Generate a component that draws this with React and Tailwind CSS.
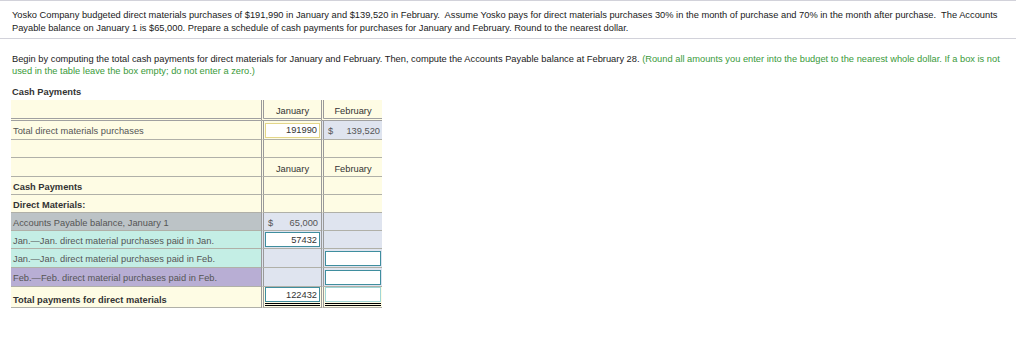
import React from "react";

const yellow = "bg-[#fefce4]";
const blue = "bg-[#dfe4ef]";
const gray = "bg-[#bcc3c6]";
const teal = "bg-[#c4eee5]";
const purple = "bg-[#b8aed4]";

const line = "border-b border-b-[#b0b0a8]";
const sep = "border-l-[3px] border-double border-l-[#9a9a9a]";

const Label = ({ bg, h, bold, children, bottom }) => (
  <div
    className={`${bg} ${h} ${line} flex ${bottom ? "items-end pb-[1px]" : "items-center pt-[2px]"} pl-[2px] ${
      bold ? "font-bold text-[#333]" : "text-[#555]"
    }`}
  >
    {children}
  </div>
);

const Box = ({ value, border, wide, total }) => (
  <div className="ml-[1px] flex flex-col">
    <input
      readOnly
      value={value || ""}
      className={`${wide ? "w-[56px]" : "w-[55px]"} h-[15px] border ${border} bg-white text-right pr-[2px] text-[9.3px] text-[#333] outline-none`}
    />
    {total && <div className={`${wide ? "w-[56px]" : "w-[55px]"} h-[3px] mt-[1px] border-y border-black`} />}
  </div>
);

export default function App() {
  return (
    <div className="w-[1024px] h-[348px] bg-white font-['Liberation_Sans',Arial,sans-serif] text-[#1a1a1a] overflow-hidden">
      <div className="w-[1016px] border-t border-b border-[#d2d2da] pt-[8px] pb-[3px] pl-[12px] text-[9.3px] leading-[13px]">
        Yosko Company budgeted direct materials purchases of $191,990 in January and $139,520 in February.{"\u00a0"} Assume Yosko pays for direct materials purchases 30% in the month of purchase and 70% in the month after purchase.{"\u00a0"} The Accounts
        <br />
        Payable balance on January 1 is $65,000. Prepare a schedule of cash payments for purchases for January and February. Round to the nearest dollar.
      </div>

      <div className="pl-[12px] mt-[14px] text-[9.3px] leading-[12px]">
        Begin by computing the total cash payments for direct materials for January and February. Then, compute the Accounts Payable balance at February 28.{" "}
        <span className="text-[#3a9a3a]">(Round all amounts you enter into the budget to the nearest whole dollar. If a box is not</span>
        <br />
        <span className="text-[#3a9a3a]">used in the table leave the box empty; do not enter a zero.)</span>
      </div>

      <div className="pl-[12px] mt-[9px] text-[9.3px] leading-[12px] font-bold text-[#333]">Cash Payments</div>

      <div className="ml-[11px] mt-[2px] grid grid-cols-[250px_60px_61px] text-[9.3px] leading-[12px]">
        {/* header 1 */}
        <div className={`${yellow} h-[21px] border-b-[3px] border-double border-b-[#a0a0a0]`} />
        <div className={`${yellow} h-[21px] border-b-[3px] border-double border-b-[#a0a0a0] ${sep} flex items-end justify-center pb-[1px] text-[#333]`}>January</div>
        <div className={`${yellow} h-[21px] border-b-[3px] border-double border-b-[#a0a0a0] ${sep} flex items-end justify-center pb-[1px] text-[#333]`}>February</div>

        {/* total purchases */}
        <Label bg={yellow} h="h-[19px]">Total direct materials purchases</Label>
        <div className={`${yellow} h-[19px] ${line} ${sep} flex items-center`}>
          <Box value="191990" border="border-[#e3d68a]" />
        </div>
        <div className={`${blue} h-[19px] ${line} ${sep} flex items-center justify-between pt-[2px] pl-[4px] pr-[2px] text-[#555]`}>
          <span>$</span>
          <span>139,520</span>
        </div>

        {/* empty */}
        <div className={`${yellow} h-[18px] ${line}`} />
        <div className={`${yellow} h-[18px] ${line} ${sep}`} />
        <div className={`${yellow} h-[18px] ${line} ${sep}`} />

        {/* header 2 */}
        <div className={`${yellow} h-[19px] ${line}`} />
        <div className={`${yellow} h-[19px] ${line} ${sep} flex items-end justify-center pb-[1px] text-[#333]`}>January</div>
        <div className={`${yellow} h-[19px] ${line} ${sep} flex items-end justify-center pb-[1px] text-[#333]`}>February</div>

        {/* cash payments */}
        <Label bg={yellow} h="h-[18px]" bold>Cash Payments</Label>
        <div className={`${yellow} h-[18px] ${line} ${sep}`} />
        <div className={`${yellow} h-[18px] ${line} ${sep}`} />

        {/* direct materials */}
        <Label bg={yellow} h="h-[18px]" bold>Direct Materials:</Label>
        <div className={`${yellow} h-[18px] ${line} ${sep}`} />
        <div className={`${yellow} h-[18px] ${line} ${sep}`} />

        {/* accounts payable */}
        <Label bg={gray} h="h-[18px]">Accounts Payable balance, January 1</Label>
        <div className={`${blue} h-[18px] ${line} ${sep} flex items-center justify-between pt-[2px] pl-[4px] pr-[3px] text-[#555]`}>
          <span>$</span>
          <span>65,000</span>
        </div>
        <div className={`${blue} h-[18px] ${line} ${sep}`} />

        {/* jan paid in jan */}
        <Label bg={teal} h="h-[18px]">Jan.—Jan. direct material purchases paid in Jan.</Label>
        <div className={`${blue} h-[18px] ${line} ${sep} flex items-center`}>
          <Box value="57432" border="border-[#3f8e9e]" />
        </div>
        <div className={`${blue} h-[18px] ${line} ${sep}`} />

        {/* jan paid in feb */}
        <Label bg={teal} h="h-[19px]">Jan.—Jan. direct material purchases paid in Feb.</Label>
        <div className={`${blue} h-[19px] ${line} ${sep}`} />
        <div className={`${blue} h-[19px] ${line} ${sep} flex items-center`}>
          <Box wide border="border-[#3f8e9e]" />
        </div>

        {/* feb paid in feb */}
        <Label bg={purple} h="h-[19px]">Feb.—Feb. direct material purchases paid in Feb.</Label>
        <div className={`${blue} h-[19px] ${line} ${sep}`} />
        <div className={`${blue} h-[19px] ${line} ${sep} flex items-center`}>
          <Box wide border="border-[#3f8e9e]" />
        </div>

        {/* total */}
        <Label bg={yellow} h="h-[21px]" bold bottom>Total payments for direct materials</Label>
        <div className={`${yellow} h-[21px] ${line} ${sep} flex items-start`}>
          <Box value="122432" border="border-[#3f8e9e]" total />
        </div>
        <div className={`${yellow} h-[21px] ${line} ${sep} flex items-start`}>
          <Box wide border="border-[#9fd6d6]" total />
        </div>
      </div>
    </div>
  );
}
